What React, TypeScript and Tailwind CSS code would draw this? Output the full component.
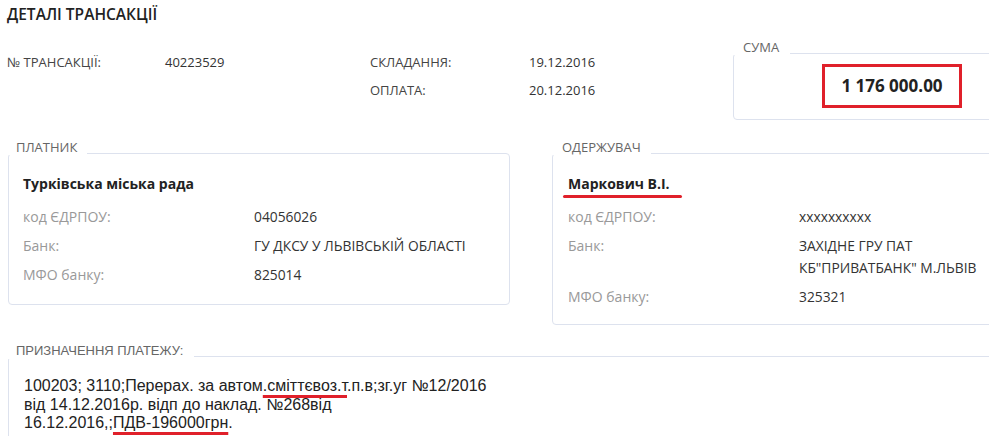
import React from "react";

const openSans = { fontFamily: '"Open Sans", "Noto Sans", sans-serif' };

function Legend({ children, className = "" }: { children: React.ReactNode; className?: string }) {
  return (
    <div className={`relative z-10 inline-block self-start bg-white text-[13px] leading-[16px] text-[#666] ${className}`}>
      {children}
    </div>
  );
}

function Row({ label, children }: { label: string; children: React.ReactNode }) {
  return (
    <div className="flex py-[3.5px] leading-[22px]">
      <div className="w-[231px] shrink-0 text-[14px] text-[#999]">{label}</div>
      <div className="text-[13.8px] text-[#333]">{children}</div>
    </div>
  );
}

export default function App() {
  return (
    <div className="h-[436px] w-[989px] overflow-hidden bg-white" style={openSans}>
      <div className="w-[1000px]">
        <h1 className="pl-[7px] pt-[4px] text-[15.5px] font-semibold leading-[20px] text-[#222]">
          ДЕТАЛІ ТРАНСАКЦІЇ
        </h1>

        <div className="flex items-start">
          <div className="ml-[7px] mt-[24px] grid grid-cols-[158px_205px_159px_204px] text-[13px] leading-[28px]">
            <div className="text-[#444]">№ ТРАНСАКЦІЇ:</div>
            <div className="text-[#333]">40223529</div>
            <div className="text-[#444]">СКЛАДАННЯ:</div>
            <div className="text-[#333]">19.12.2016</div>
            <div />
            <div />
            <div className="text-[#444]">ОПЛАТА:</div>
            <div className="text-[#333]">20.12.2016</div>
          </div>

          <div className="mt-[15px] flex flex-1 flex-col">
            <Legend className="pl-[10px] pr-[11px]">СУМА</Legend>
            <div className="-mt-[2px] flex h-[67px] rounded-[4px] border border-[#dde2ee] pt-[10px]">
              <div className="ml-[88px] flex h-[44px] w-[140px] items-center justify-center border-[3px] border-[#e0202a] text-[17px] font-bold text-[#222]">
                1 176 000.00
              </div>
            </div>
          </div>
        </div>

        <div className="mt-[19px] flex items-start gap-[42px] pl-[8px]">
          <div className="flex w-[502px] flex-col">
            <Legend className="pl-[8px] pr-[10px]">ПЛАТНИК</Legend>
            <div className="-mt-[2px] rounded-[4px] border border-[#dde2ee] px-[14px] pb-[15px] pt-[20px]">
              <div className="mb-[8px] text-[14px] font-bold leading-[20px] text-[#222]">
                Турківська міська рада
              </div>
              <Row label="код ЄДРПОУ:">04056026</Row>
              <Row label="Банк:">ГУ ДКСУ У ЛЬВІВСЬКІЙ ОБЛАСТІ</Row>
              <Row label="МФО банку:">825014</Row>
            </div>
          </div>

          <div className="flex flex-1 flex-col">
            <Legend className="pl-[10px] pr-[10px]">ОДЕРЖУВАЧ</Legend>
            <div className="-mt-[2px] rounded-[4px] border border-[#dde2ee] px-[15px] pb-[13px] pt-[20px]">
              <div className="relative mb-[8px] self-start text-[14px] font-bold leading-[20px] text-[#222]">
                Маркович В.І.
                <span className="absolute left-[-5px] top-[21px] h-[3px] w-[119px] rounded-full bg-[#e0202a]" />
              </div>
              <Row label="код ЄДРПОУ:">xxxxxxxxxx</Row>
              <Row label="Банк:">
                ЗАХІДНЕ ГРУ ПАТ
                <br />
                КБ"ПРИВАТБАНК" М.ЛЬВІВ
              </Row>
              <Row label="МФО банку:">325321</Row>
            </div>
          </div>
        </div>

        <div className="mt-[18px] flex flex-col pl-[8px]">
          <div
            className="relative z-10 inline-block self-start bg-white pl-[8px] pr-[11px] text-[13px] leading-[16px] text-[#666]"
            style={{ fontFamily: '"Liberation Sans", Arial, sans-serif' }}
          >
            ПРИЗНАЧЕННЯ ПЛАТЕЖУ:
          </div>
          <div
            className="-mt-[3px] h-[120px] rounded-[4px] border border-[#dde2ee] pl-[15px] pt-[20px] text-[16px] leading-[18.5px] text-[#222]"
            style={{ fontFamily: '"Liberation Sans", Arial, sans-serif' }}
          >
            100203; 3110;Перерах. за автом
            <span className="underline decoration-[#e0202a] decoration-[3px] underline-offset-[4px]">.сміттєвоз.т</span>
            .п.в;зг.уг №12/2016
            <br />
            від 14.12.2016р. відп до наклад. №268від
            <br />
            16.12.2016,;
            <span className="underline decoration-[#e0202a] decoration-[3px] underline-offset-[4px]">ПДВ-196000грн</span>.
          </div>
        </div>
      </div>
    </div>
  );
}
